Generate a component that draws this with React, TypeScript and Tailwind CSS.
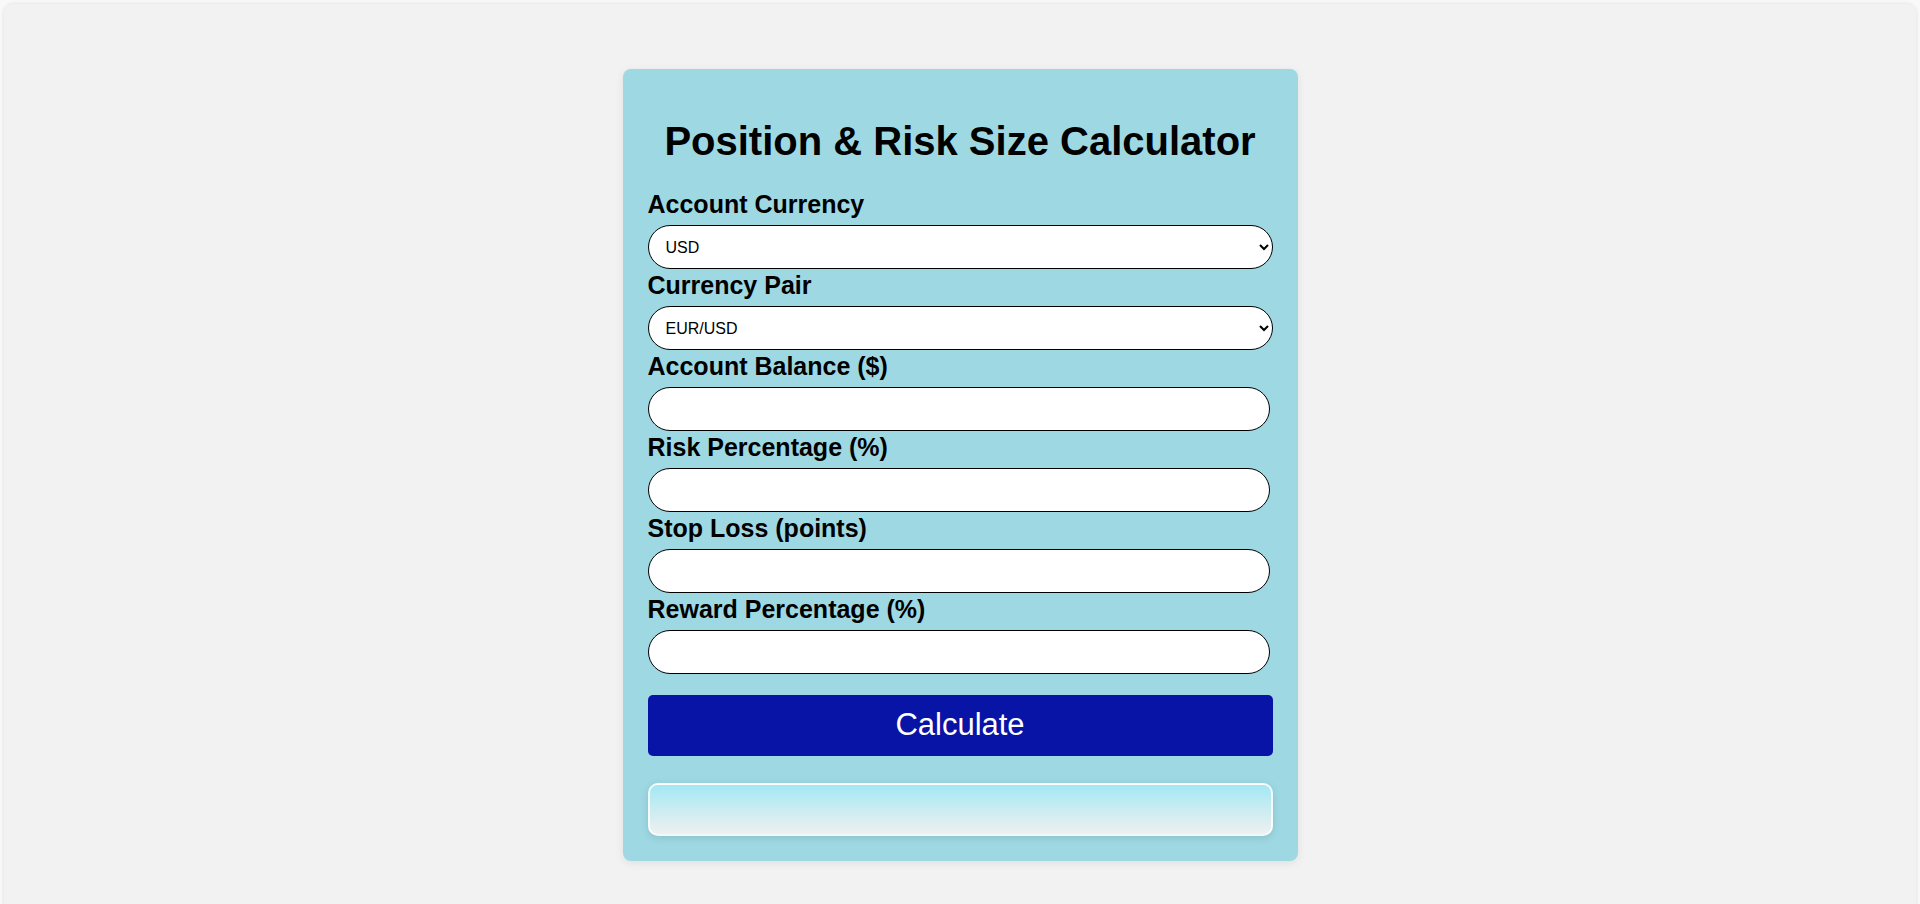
import { useState } from 'react'

const fields = [
  { key: 'balance', label: 'Account Balance ($)' },
  { key: 'risk', label: 'Risk Percentage (%)' },
  { key: 'stop', label: 'Stop Loss (points)' },
  { key: 'reward', label: 'Reward Percentage (%)' },
]

export default function App() {
  const [currency, setCurrency] = useState('USD')
  const [pair, setPair] = useState('EUR/USD')
  const [values, setValues] = useState<Record<string, string>>({})

  const labelCls = 'block text-[25px] leading-[29px] font-bold text-black mb-[6px]'
  const selectCls =
    'block w-full h-[44px] mb-[2px] rounded-[22px] border border-black bg-white pl-[13px] pr-[8px] text-[16px] text-black font-["Liberation_Sans",Arial,sans-serif]'
  const inputCls =
    'block w-[622px] h-[44px] mb-[2px] rounded-[22px] border border-black bg-white px-[16px] text-[16px] text-black outline-none'

  return (
    <div className="min-h-screen bg-[#f9f9f9] p-[4px] font-['Liberation_Sans',Arial,sans-serif]">
      <div className="min-h-[960px] rounded-[10px] bg-[#f2f2f2] shadow-[0_0_4px_rgba(0,0,0,0.12)] pt-[65px] flex justify-center">
        <div className="w-[675px] self-start rounded-[8px] bg-[#9ed9e3] p-[25px] shadow-[0_2px_8px_rgba(0,0,0,0.08)]">
          <h1 className="mt-[24px] mb-[26px] text-center text-[40px] leading-[46px] font-bold text-black">
            Position &amp; Risk Size Calculator
          </h1>

          <label className={labelCls}>Account Currency</label>
          <select className={selectCls} value={currency} onChange={(e) => setCurrency(e.target.value)}>
            <option>USD</option>
            <option>EUR</option>
            <option>GBP</option>
          </select>

          <label className={labelCls}>Currency Pair</label>
          <select className={selectCls} value={pair} onChange={(e) => setPair(e.target.value)}>
            <option>EUR/USD</option>
            <option>GBP/USD</option>
            <option>USD/JPY</option>
          </select>

          {fields.map((f) => (
            <div key={f.key}>
              <label className={labelCls}>{f.label}</label>
              <input
                type="number"
                className={inputCls}
                value={values[f.key] || ''}
                onChange={(e) => setValues({ ...values, [f.key]: e.target.value })}
              />
            </div>
          ))}

          <button className="mt-[21px] block w-full h-[61px] rounded-[5px] bg-[#0714a5] text-[31px] text-white">
            Calculate
          </button>

          <div className="mt-[27px] h-[53px] rounded-[10px] border-2 border-white/80 bg-gradient-to-b from-[#a2e8f4] to-[#eef0f0] shadow-[0_2px_8px_rgba(0,0,0,0.12)]" />
        </div>
      </div>
    </div>
  )
}
